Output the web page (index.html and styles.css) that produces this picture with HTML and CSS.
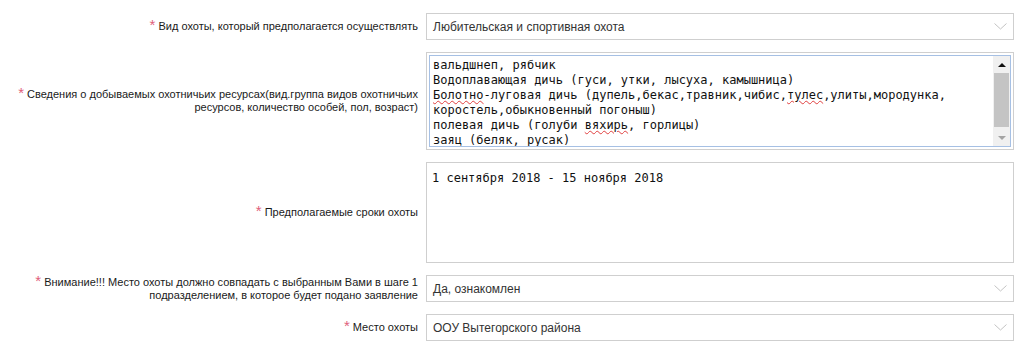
FILE: index.html
```html
<!DOCTYPE html>
<html lang="ru">
<head>
    <meta charset="UTF-8">
    <meta name="viewport" content="width=device-width, initial-scale=1.0">
    <title>Заявление</title>
<link rel="stylesheet" href="styles.css">
</head>
<body>

  <div class="form">

    <div class="row">
      <div class="lbl"><span class="req">*</span> Вид охоты, который предполагается осуществлять</div>
      <div class="ctrl select">
        <span>Любительская и спортивная охота</span>
        <svg class="chev" width="13" height="7" viewBox="0 0 13 7"><polyline points="0.5,0.5 6.5,6 12.5,0.5" fill="none" stroke="#c4c4c4" stroke-width="1"/></svg>
      </div>
    </div>

    <div class="row">
      <div class="lbl"><span class="req">*</span> Сведения о добываемых охотничьих ресурсах(вид.группа видов охотничьих ресурсов, количество особей, пол, возраст)</div>
      <div class="ctrl area-wrap">
        <div class="area">
          <div class="lines">
            <div>вальдшнеп, рябчик</div>
            <div>Водоплавающая дичь (гуси, утки, лысуха, камышница)</div>
            <div><span class="typo">Болотно</span>-луговая дичь (дупель,бекас,травник,чибис,<span class="typo">тулес</span>,улиты,мородунка,</div>
            <div>коростель,обыкновенный погоныш)</div>
            <div>полевая дичь (голуби <span class="typo">вяхирь</span>, горлицы)</div>
            <div>заяц (беляк, русак)</div>
          </div>
          <div class="sbar">
            <div class="sbtn"><span class="tri up"></span></div>
            <div class="thumb"></div>
            <div class="track"></div>
            <div class="sbtn"><span class="tri down"></span></div>
          </div>
        </div>
      </div>
    </div>

    <div class="row">
      <div class="lbl"><span class="req">*</span> Предполагаемые сроки охоты</div>
      <div class="ctrl text-box">
        <div>1 сентября 2018 - 15 ноября 2018</div>
      </div>
    </div>

    <div class="row">
      <div class="lbl"><span class="req">*</span> Внимание!!! Место охоты должно совпадать с выбранным Вами в шаге 1 подразделением, в которое будет подано заявление</div>
      <div class="ctrl select">
        <span>Да, ознакомлен</span>
        <svg class="chev" width="13" height="7" viewBox="0 0 13 7"><polyline points="0.5,0.5 6.5,6 12.5,0.5" fill="none" stroke="#c4c4c4" stroke-width="1"/></svg>
      </div>
    </div>

    <div class="row">
      <div class="lbl"><span class="req">*</span> Место охоты</div>
      <div class="ctrl select">
        <span>ООУ Вытегорского района</span>
        <svg class="chev" width="13" height="7" viewBox="0 0 13 7"><polyline points="0.5,0.5 6.5,6 12.5,0.5" fill="none" stroke="#c4c4c4" stroke-width="1"/></svg>
      </div>
    </div>

  </div>

</body>
</html>
```

FILE: styles.css
```css
body {
  margin: 0;
  padding: 0;
  background: #fff;
  color: #222;
  font-family: "Liberation Sans", Arial, sans-serif;
  font-size: 12px;
}

.form {
  display: flex;
  flex-direction: column;
  gap: 12px;
  padding: 13px 8px 0 0;
}

.row {
  display: flex;
  align-items: center;
  gap: 8px;
}

.lbl {
  width: 418px;
  flex: none;
  text-align: right;
  font-size: 11px;
  line-height: 13px;
  color: #1a1a1a;
}

.req {
  color: #e0607a;
  font-size: 15px;
  vertical-align: top;
  line-height: 10px;
}

.ctrl {
  flex: 1;
  box-sizing: border-box;
  border: 1px solid #cfcfcf;
  background: #fff;
}

.select {
  height: 27px;
  display: flex;
  align-items: center;
  justify-content: space-between;
  padding: 0 6px 0 6px;
  color: #333;
}

.chev {
  display: block;
}

/* focused textarea with its scrollbar */
.area-wrap {
  height: 98px;
  padding: 2px;
}

.area {
  height: 100%;
  box-sizing: border-box;
  border: 1px solid #a6c0e4;
  display: flex;
}

.lines {
  flex: 1;
  overflow: hidden;
  padding: 2px 3px 0;
  font-family: "DejaVu Sans Mono", Consolas, monospace;
  font-size: 12px;
  line-height: 15px;
  color: #111;
}

.lines div {
  white-space: pre;
}

.typo {
  text-decoration: underline wavy #e04040;
  text-decoration-thickness: 1px;
  text-underline-offset: 1px;
}

.sbar {
  width: 17px;
  flex: none;
  background: #f0f0f0;
  display: flex;
  flex-direction: column;
}

.sbtn {
  height: 17px;
  display: flex;
  align-items: center;
  justify-content: center;
}

.tri {
  width: 0;
  height: 0;
  border-left: 4px solid transparent;
  border-right: 4px solid transparent;
}

.tri.up {
  border-bottom: 4px solid #111;
}

.tri.down {
  border-top: 4px solid #a3a3a3;
}

.thumb {
  height: 54px;
  margin: 0 1px;
  background: #c4c4c4;
}

.track {
  flex: 1;
}

.text-box {
  height: 101px;
  padding: 8px 5px;
  font-family: "DejaVu Sans Mono", Consolas, monospace;
  font-size: 12px;
  line-height: 15px;
  color: #111;
}
```
